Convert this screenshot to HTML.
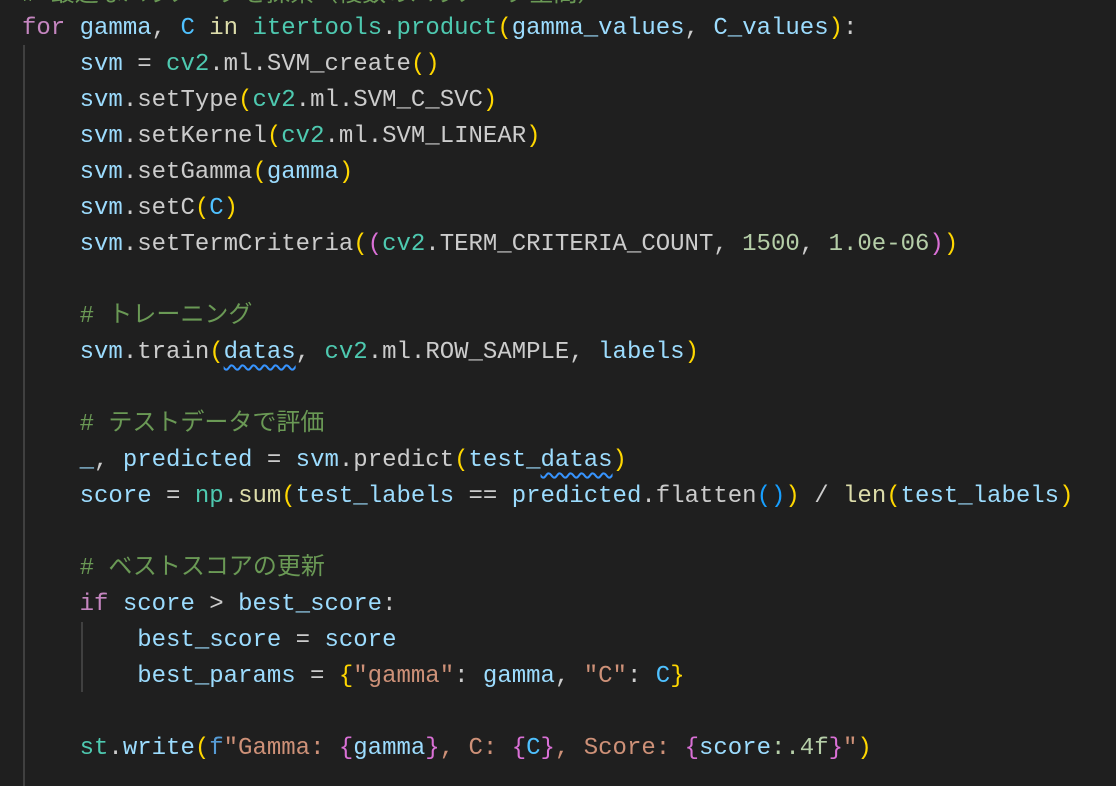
<!DOCTYPE html>
<html><head><meta charset="utf-8"><style>
html,body{margin:0;padding:0;background:#1f1f1f;width:1116px;height:786px;overflow:hidden}
#c{position:absolute;left:22px;top:-25px;font-family:"Liberation Mono","Noto Sans CJK JP",monospace;font-size:24px;line-height:36px;color:#cccccc;white-space:pre}
.l{height:36px}
.k{color:#c586c0}.v{color:#9cdcfe}.f{color:#dcdcaa}.t{color:#4ec9b0}.g{color:#ffd700}.p{color:#da70d6}.b{color:#179fff}
.s{color:#ce9178}.n{color:#b5cea8}.c{color:#6a9955}.C{color:#4fc1ff}.kw{color:#569cd6}
.w{text-decoration:underline wavy #3794ff;text-underline-offset:6px;text-decoration-thickness:1.5px}
.g1{position:absolute;left:23px;top:45px;width:2px;height:741px;background:#404040}
.g2{position:absolute;left:81px;top:622px;width:2px;height:70px;background:#404040}
.top{position:absolute;left:22px;top:-27px;font-family:"Liberation Mono","Noto Sans CJK JP",monospace;font-size:24px;color:#6a9955;white-space:pre}
</style></head><body>
<div class="g1"></div><div class="g2"></div>
<div class="top"># 最適なパラメータを探索（複数のパラメータ空間）</div>
<div id="c"><div class="l"> </div><div class="l"><span class="k">for</span> <span class="v">gamma</span>, <span class="C">C</span> <span class="f">in</span> <span class="t">itertools</span>.<span class="t">product</span><span class="g">(</span><span class="v">gamma_values</span>, <span class="v">C_values</span><span class="g">)</span>:</div><div class="l">    <span class="v">svm</span> = <span class="t">cv2</span>.ml.SVM_create<span class="g">()</span></div><div class="l">    <span class="v">svm</span>.setType<span class="g">(</span><span class="t">cv2</span>.ml.SVM_C_SVC<span class="g">)</span></div><div class="l">    <span class="v">svm</span>.setKernel<span class="g">(</span><span class="t">cv2</span>.ml.SVM_LINEAR<span class="g">)</span></div><div class="l">    <span class="v">svm</span>.setGamma<span class="g">(</span><span class="v">gamma</span><span class="g">)</span></div><div class="l">    <span class="v">svm</span>.setC<span class="g">(</span><span class="C">C</span><span class="g">)</span></div><div class="l">    <span class="v">svm</span>.setTermCriteria<span class="g">(</span><span class="p">(</span><span class="t">cv2</span>.TERM_CRITERIA_COUNT, <span class="n">1500</span>, <span class="n">1.0e-06</span><span class="p">)</span><span class="g">)</span></div><div class="l"> </div><div class="l">    <span class="c"># トレーニング</span></div><div class="l">    <span class="v">svm</span>.train<span class="g">(</span><span class="v w">datas</span>, <span class="t">cv2</span>.ml.ROW_SAMPLE, <span class="v">labels</span><span class="g">)</span></div><div class="l"> </div><div class="l">    <span class="c"># テストデータで評価</span></div><div class="l">    <span class="v">_</span>, <span class="v">predicted</span> = <span class="v">svm</span>.predict<span class="g">(</span><span class="v">test_<span class="w">datas</span></span><span class="g">)</span></div><div class="l">    <span class="v">score</span> = <span class="t">np</span>.<span class="f">sum</span><span class="g">(</span><span class="v">test_labels</span> == <span class="v">predicted</span>.flatten<span class="b">()</span><span class="g">)</span> / <span class="f">len</span><span class="g">(</span><span class="v">test_labels</span><span class="g">)</span></div><div class="l"> </div><div class="l">    <span class="c"># ベストスコアの更新</span></div><div class="l">    <span class="k">if</span> <span class="v">score</span> &gt; <span class="v">best_score</span>:</div><div class="l">        <span class="v">best_score</span> = <span class="v">score</span></div><div class="l">        <span class="v">best_params</span> = <span class="g">{</span><span class="s">"gamma"</span>: <span class="v">gamma</span>, <span class="s">"C"</span>: <span class="C">C</span><span class="g">}</span></div><div class="l"> </div><div class="l">    <span class="t">st</span>.<span class="v">write</span><span class="g">(</span><span class="kw">f</span><span class="s">"Gamma: </span><span class="p">{</span><span class="v">gamma</span><span class="p">}</span><span class="s">, C: </span><span class="p">{</span><span class="C">C</span><span class="p">}</span><span class="s">, Score: </span><span class="p">{</span><span class="v">score</span><span class="n">:.4f</span><span class="p">}</span><span class="s">"</span><span class="g">)</span></div></div>
</body></html>
